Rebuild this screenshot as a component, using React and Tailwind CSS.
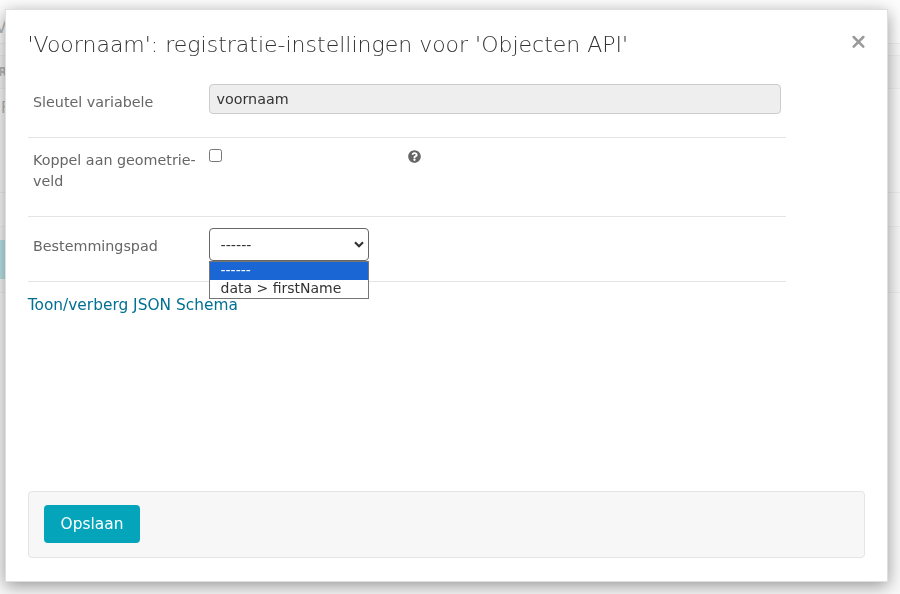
import React from 'react';

function Backdrop() {
  return (
    <div className="h-full bg-[#f9f9f9] text-[#b8b8b8]">
      <div className="h-[44px] overflow-hidden border-b border-[#eeeeee] pt-[18px] text-[15px] leading-[20px] bg-[#fdfdfd]">
        <span className="-ml-[4px]">V</span>
      </div>
      <div className="h-[12px] border-b border-[#eeeeee]" />
      <div className="h-[33px] border-b border-[#eeeeee] bg-[#f5f5f5] pt-[7px] text-[12px] leading-[18px] font-bold">
        <span className="-ml-[2px]">R</span>
      </div>
      <div className="h-[104px] border-b border-[#eeeeee] pt-[9px] text-[15px] leading-[20px]">
        <span className="ml-[1px]">F</span>
      </div>
      <div className="h-[34px] border-b border-[#eeeeee]" />
      <div className="h-[66px] border-b border-[#eeeeee] bg-[#f7f7f7] pt-[13px]">
        <div className="h-[39px] w-[20px] bg-[#b9e4e8]" />
      </div>
    </div>
  );
}

function Row({ label, className, children }) {
  return (
    <div className={`flex w-[758px] border-b border-[#e4e4e4] pl-[5px] ${className}`}>
      <div className="w-[176px] shrink-0 text-[14.3px] leading-[21px] text-[#666]">{label}</div>
      {children}
    </div>
  );
}

function Destination() {
  return (
    <div className="relative mt-[11px] h-[33px] w-[160px] text-[14px] text-[#333]">
      <div className="flex h-full items-center justify-between rounded-[4px] border border-[#666] bg-white pl-[10.5px] pr-[4px]">
        <span className="pt-[2px] text-[14.3px]">------</span>
        <svg width="10" height="7" viewBox="0 0 10 7" fill="none" stroke="#333" strokeWidth="2.2">
          <path d="M1 1.2 5 5.2 9 1.2" />
        </svg>
      </div>
      <div className="absolute left-0 top-[33px] w-[160px] border border-[#767676] bg-white leading-[16px]">
        <div className="h-[18px] bg-[#1a66d5] pl-[10.5px] text-white">------</div>
        <div className="h-[18px] pl-[10.5px]">data &gt; firstName</div>
      </div>
    </div>
  );
}

export default function App() {
  return (
    <div className="relative h-[594px] w-[900px] overflow-hidden font-['DejaVu_Sans',sans-serif]">
      <Backdrop />
      <div className="absolute left-[5px] top-[9px] flex h-[573px] w-[883px] flex-col border border-[#dfdfdf] bg-white px-[22px] shadow-[0_4px_16px_rgba(0,0,0,0.4)] will-change-transform">
        <div className="flex h-[68px] shrink-0 justify-between">
          <h1 className="-ml-[0.5px] pt-[20px] text-[22px] font-extralight leading-[30px] text-[#333] whitespace-nowrap">
            'Voornaam': registratie-instellingen voor 'Objecten API'
          </h1>
          <svg className="mt-[25px]" width="13" height="14" viewBox="0 0 13 14" stroke="#999" strokeWidth="2.5" strokeLinecap="round">
            <path d="M1.7 2 11.3 11.6M11.3 2 1.7 11.6" />
          </svg>
        </div>
        <Row className="h-[60px] pt-[6px]" label={<div className="pt-[8px]">Sleutel variabele</div>}>
          <div className="h-[30px] w-[572px] rounded-[4px] border border-[#ccc] bg-[#eee] pl-[6.5px] text-[14.3px] leading-[28px] text-[#333]">voornaam</div>
        </Row>
        <Row className="h-[79px]" label={<div className="pt-[12px]">Koppel aan geometrie-<br />veld</div>}>
          <div className="mt-[11px] h-[13px] w-[13px] rounded-[2.5px] border border-[#767676]" />
          <svg className="ml-[186px] mt-[12px]" width="13" height="13" viewBox="0 0 512 512" fill="#666">
            <path d="M504 256c0 136.997-111.043 248-248 248S8 392.997 8 256C8 119.083 119.043 8 256 8s248 111.083 248 248zM262.655 90c-54.497 0-89.255 22.957-116.549 63.758-3.536 5.286-2.353 12.415 2.715 16.258l34.699 26.31c5.205 3.947 12.621 3.008 16.665-2.122 17.864-22.658 30.113-35.797 57.303-35.797 20.429 0 45.698 13.148 45.698 32.958 0 14.976-12.363 22.667-32.534 33.976C247.128 238.528 216 254.941 216 296v4c0 6.627 5.373 12 12 12h56c6.627 0 12-5.373 12-12v-1.333c0-28.462 83.186-29.647 83.186-106.667 0-58.002-60.165-102-116.531-102zM256 338c-25.365 0-46 20.635-46 46 0 25.364 20.635 46 46 46s46-20.636 46-46c0-25.365-20.635-46-46-46z" />
          </svg>
        </Row>
        <Row className="h-[65px]" label={<div className="pt-[19px]">Bestemmingspad</div>}>
          <Destination />
        </Row>
        <a className="-ml-[0.3px] mt-[12px] text-[15.4px] leading-[22px] text-[#017092]">Toon/verberg JSON Schema</a>
        <div className="mt-auto mb-[23px] h-[67px] w-[837px] rounded-[4px] border border-[#e4e4e4] bg-[#f7f7f7] px-[15px] py-[13px]">
          <button className="h-[38px] w-[96px] rounded-[4px] bg-[#04a5bb] text-[15.4px] leading-[22px] text-white">Opslaan</button>
        </div>
      </div>
    </div>
  );
}
